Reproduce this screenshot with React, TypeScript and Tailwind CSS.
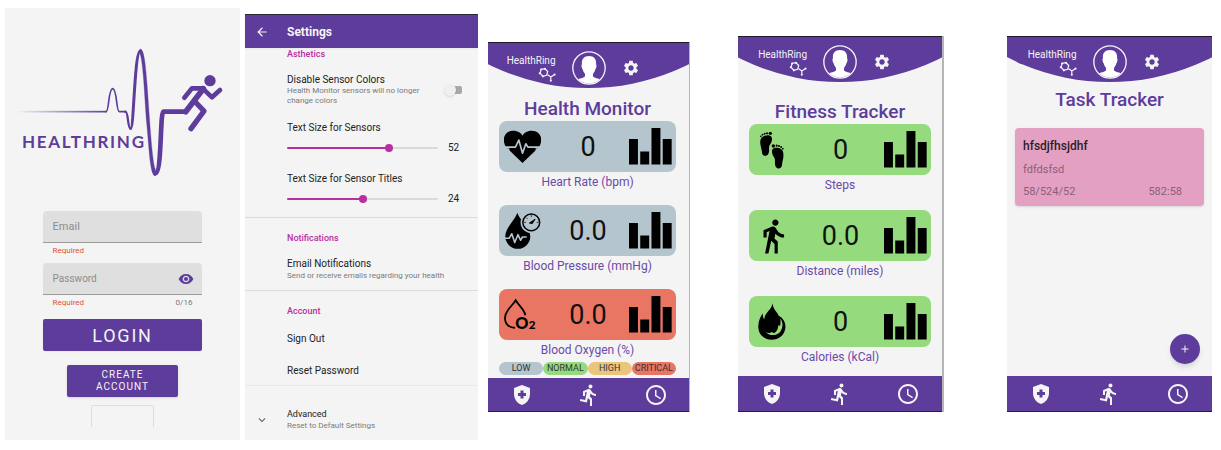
import { useState, type ReactNode } from "react";
import {
  MdAccessTime,
  MdAdd,
  MdArrowBack,
  MdDirectionsRun,
  MdDirectionsWalk,
  MdExpandMore,
  MdHealthAndSafety,
  MdSettings,
  MdVisibility,
} from "react-icons/md";

function Logo() {
  return (
    <svg
      viewBox="15 24 705 609"
      className="block w-full"
      role="img"
      aria-label="HealthRing"
      fill="none"
      stroke="#5e3c9b"
      strokeLinecap="round"
      strokeLinejoin="round"
    >
      <defs>
        <linearGradient id="fade" x1="0" x2="1" y1="0" y2="0">
          <stop offset="0" stopColor="#5e3c9b" stopOpacity="0" />
          <stop offset="1" stopColor="#5e3c9b" />
        </linearGradient>
      </defs>
      <rect x="50" y="332.5" width="270" height="5" fill="url(#fade)" stroke="none" />
      <path d="M318 335C328 335 324 268 338 266C352 268 348 335 358 335H376" strokeWidth="5" />
      <path d="M376 335C386 335 382 386 392 386" strokeWidth="7" />
      <path d="M392 385C402 385 403 153 421 153" strokeWidth="9" />
      <path
        d="M421 147C432 147 436 190 441 250C447 330 456 490 466 508L466 528C450 528 448 450 440 370C434 300 430 180 419 158Z"
        fill="#5e3c9b"
        strokeWidth="1"
      />
      <path d="M466 520C486 520 480 335 490 335H557" strokeWidth="14" />
      <g strokeWidth="14">
        <path d="M557 335L610 266" strokeWidth="17" />
        <path d="M610 265H576L553 293" />
        <path d="M608 265L636 292L660 270" />
        <path d="M583 303L612 333L573 386" strokeWidth="16" />
      </g>
      <circle cx="630" cy="242" r="17" fill="#5e3c9b" stroke="none" />
      <text
        x="66"
        y="443"
        fill="#5e3c9b"
        stroke="none"
        className="font-['Lato',sans-serif] text-[51px] font-bold tracking-widest"
      >
        HEALTHRING
      </text>
    </svg>
  );
}

function LoginScreen() {
  const [visible, setVisible] = useState(false);
  return (
    <section className="mt-2 flex h-[432px] min-w-0 grow-[235] basis-0 flex-col bg-[#f4f4f4]">
      <Logo />
      <form className="mx-auto flex w-[68%] flex-col" onSubmit={(e) => e.preventDefault()}>
        <input
          type="email"
          aria-label="Email"
          placeholder="Email"
          className="h-8 w-full rounded-t-sm border-b border-[#9a9a9a] bg-[#dfdfdf] px-2.5 text-[11px] outline-none placeholder:text-[#8c8c8c]"
        />
        <p className="px-2.5 pt-1 text-[8px] leading-2 text-[#dc5330]">Required</p>
        <div className="mt-2 flex h-8 items-center rounded-t-sm border-b border-[#9a9a9a] bg-[#dfdfdf] pr-2 pl-2.5">
          <input
            type={visible ? "text" : "password"}
            aria-label="Password"
            placeholder="Password"
            maxLength={16}
            className="min-w-0 grow bg-transparent text-[10px] outline-none placeholder:text-[#8c8c8c]"
          />
          <button type="button" aria-label="Show password" onClick={() => setVisible(!visible)}>
            <MdVisibility className="size-4 text-[#5e3c9b]" />
          </button>
        </div>
        <div className="flex justify-between px-2.5 pt-1 text-[8px] leading-2">
          <span className="text-[#dc5330]">Required</span>
          <span className="text-[#777777]">0/16</span>
        </div>
        <button
          type="submit"
          className="mt-3 h-8 rounded-xs bg-[#5e3c9b] text-[18px] tracking-widest text-[#f4f4f4] shadow-xs"
        >
          LOGIN
        </button>
        <button
          type="button"
          className="mx-auto mt-3.5 h-8 w-[70%] rounded-xs bg-[#5e3c9b] px-6 text-[10px] leading-3 tracking-widest text-[#f4f4f4] shadow-sm"
        >
          CREATE ACCOUNT
        </button>
        <div className="mx-auto mt-2 h-[22px] w-[40%] rounded-t-xs border border-b-0 border-[#dddddd]" />
      </form>
    </section>
  );
}

function SizeSlider({ id, label, initial, max }: { id: string; label: string; initial: number; max: number }) {
  const [value, setValue] = useState(initial);
  const fill = `${(value / max) * 100}%`;
  return (
    <div className="flex flex-col gap-2 pr-4">
      <label htmlFor={id} className="text-[10px] leading-3 text-[#222222]">
        {label}
      </label>
      <div className="flex items-center gap-2.5">
        <input
          id={id}
          type="range"
          min={0}
          max={max}
          value={value}
          onChange={(e) => setValue(Number(e.target.value))}
          style={{
            backgroundImage: `linear-gradient(to right, #b82fa0 ${fill}, #d9d9d9 ${fill})`,
          }}
          className="h-0.5 min-w-0 grow appearance-none rounded-full [&::-webkit-slider-thumb]:size-2 [&::-webkit-slider-thumb]:appearance-none [&::-webkit-slider-thumb]:rounded-full [&::-webkit-slider-thumb]:bg-[#b82fa0]"
        />
        <output htmlFor={id} className="w-3.5 text-[10px] leading-3 text-[#222222]">
          {value}
        </output>
      </div>
    </div>
  );
}

function SectionTitle({ children }: { children: ReactNode }) {
  return <h3 className="text-[9px] leading-3 font-medium text-[#b82fa0]">{children}</h3>;
}

function SettingsScreen() {
  return (
    <section className="mt-3.5 ml-[5px] flex h-[426px] min-w-0 grow-[233] basis-0 flex-col bg-[#f4f4f4]">
      <header className="flex h-[34px] shrink-0 items-center border-t border-[#2c2636] bg-[#5e3c9b] pl-2.5 text-[#f4f4f4] shadow-xs">
        <button type="button" aria-label="Back" className="w-8">
          <MdArrowBack className="size-3.5" />
        </button>
        <h2 className="text-[12px] font-bold">Settings</h2>
      </header>

      <div className="flex flex-col border-b border-[#dcdcdc] pb-3 pl-[42px]">
        <SectionTitle>Asthetics</SectionTitle>
        <div className="mt-3.5 flex items-center justify-between pr-4">
          <label htmlFor="disable-colors" className="text-[10px] leading-3 text-[#222222]">
            Disable Sensor Colors
            <span className="block text-[8px] leading-2.5 text-[#7b7b7b]">
              Health Monitor sensors will no longer
              <br />
              change colors
            </span>
          </label>
          <input
            id="disable-colors"
            type="checkbox"
            role="switch"
            className="flex h-2 w-4.5 appearance-none items-center rounded-xs bg-linear-to-r from-transparent from-30% to-[#a8a8a8] to-30% before:size-3 before:shrink-0 before:rounded-full before:bg-[#efefef] before:shadow-sm checked:justify-end"
          />
        </div>
        <div className="mt-4 flex flex-col gap-[19px]">
          <SizeSlider id="sensor-size" label="Text Size for Sensors" initial={52} max={76} />
          <SizeSlider id="title-size" label="Text Size for Sensor Titles" initial={24} max={48} />
        </div>
      </div>

      <div className="flex flex-col items-start gap-3.5 border-b border-[#dcdcdc] pt-3.5 pb-2 pl-[42px]">
        <SectionTitle>Notifications</SectionTitle>
        <button type="button" className="text-left text-[10px] leading-3 text-[#222222]">
          Email Notifications
          <span className="block text-[8px] leading-3 whitespace-nowrap text-[#7b7b7b]">
            Send or receive emails regarding your health
          </span>
        </button>
      </div>

      <div className="flex flex-col items-start border-b border-[#e9e9e9] pt-3.5 pb-2 pl-[42px] text-[10px] leading-3 text-[#222222]">
        <SectionTitle>Account</SectionTitle>
        <button type="button" className="mt-4">
          Sign Out
        </button>
        <button type="button" className="mt-5">
          Reset Password
        </button>
      </div>

      <button type="button" className="flex items-center pt-[22px] pl-2.5 text-left">
        <span className="w-8">
          <MdExpandMore className="size-3.5 text-[#666666]" />
        </span>
        <span className="text-[9px] leading-3 text-[#222222]">
          Advanced
          <span className="block text-[8px] leading-3 text-[#7b7b7b]">Reset to Default Settings</span>
        </span>
      </button>
    </section>
  );
}

function Molecule() {
  return (
    <svg viewBox="0 0 52 44" className="w-[18px]" fill="none" stroke="#f4f4f4" strokeWidth="3.500">
      <path d="M9 7L20 5L28 13L25 24L14 27L6 18Z" />
      <path d="M27 22L37 29M37 29L48 22M37 29V40" />
      <g fill="#f4f4f4" stroke="none">
        <circle cx="9" cy="7" r="3" />
        <circle cx="20" cy="5" r="3" />
        <circle cx="14" cy="27" r="3" />
        <circle cx="5" cy="18" r="3" />
        <circle cx="48" cy="22" r="3" />
        <circle cx="37" cy="40" r="3" />
      </g>
    </svg>
  );
}

function Avatar() {
  return (
    <svg viewBox="0 0 102 102" className="size-[34px]">
      <circle cx="51" cy="51" r="48.500" fill="none" stroke="#f4f4f4" strokeWidth="4" />
      <path
        d="M51 15C67 15 74 26 72 40C75 42 73 53 70 55C69 62 65 66 63 69V76C65 81 76 81 83 85A46 46 0 0 1 19 85C26 81 37 81 39 76V69C37 66 33 62 32 55C29 53 27 42 30 40C28 26 35 15 51 15Z"
        fill="#ffffff"
      />
    </svg>
  );
}

function TopBar() {
  return (
    <header className="grid h-[46px] shrink-0 grid-cols-[1fr_34px_1fr] items-start gap-4 border-t border-[#20182c] bg-[#5e3c9b] pt-2 text-[#f4f4f4] [clip-path:circle(225px_at_50%_-179px)]">
      <div className="flex flex-col items-end pt-1">
        <span className="text-[10px] leading-3">HealthRing</span>
        <Molecule />
      </div>
      <Avatar />
      <button type="button" aria-label="Settings" className="justify-self-start pt-2">
        <MdSettings className="size-[18px]" />
      </button>
    </header>
  );
}

function NavBar({ height }: { height: string }) {
  return (
    <nav
      className={`mt-auto grid shrink-0 grid-cols-3 items-center justify-items-center border-b border-[#2a1a4a] bg-[#5e3c9b] text-[#f4f4f4] ${height}`}
    >
      <button type="button" aria-label="Health">
        <MdHealthAndSafety className="size-6" />
      </button>
      <button type="button" aria-label="Fitness">
        <MdDirectionsRun className="size-6" />
      </button>
      <button type="button" aria-label="Tasks">
        <MdAccessTime className="size-6" />
      </button>
    </nav>
  );
}

function BarsIcon() {
  return (
    <svg viewBox="0 0 130 110" className="w-[43px]">
      <path d="M0 33H27V110H0ZM34 71H61V110H34ZM68 0H95V110H68ZM102 33H129V110H102Z" />
    </svg>
  );
}

function HeartIcon() {
  return (
    <svg viewBox="66 284 110 100" className="w-[37px]">
      <path d="M121 382L73 336C58 316 65 286 94 286C108 286 117 293 121 301C125 293 134 286 148 286C177 286 184 316 169 336Z" />
      <path d="M64 335H100L110 314L121 353L131 325L137 335H178" fill="none" stroke="#b4c5ce" strokeWidth="5" strokeLinejoin="round" />
      <path d="M66 338H82V347H78ZM176 338H160V347H164Z" fill="#b4c5ce" />
    </svg>
  );
}

function PressureIcon() {
  return (
    <svg viewBox="64 64 114 116" className="w-[37px]">
      <path d="M105 66C110 86 145 112 145 139A38 38 0 0 1 68 139C68 112 99 88 105 66Z" />
      <circle cx="148" cy="96" r="33" fill="#b4c5ce" />
      <circle cx="148" cy="96" r="26" fill="none" stroke="#000" strokeWidth="4.500" />
      <path d="M148 74V79M126 96H131M170 96H165M132 81L136 85M142 98L160 86L151 100Z" stroke="#000" strokeWidth="2.500" />
      <path d="M64 145H80L88 131L97 158L107 134L115 151L121 141H134" fill="none" stroke="#b4c5ce" strokeWidth="5" strokeLinejoin="round" />
    </svg>
  );
}

function OxygenIcon() {
  return (
    <svg viewBox="64 324 114 100" className="w-[37px]">
      <path d="M98 416C64 414 60 382 77 360C87 346 94 342 100 331C108 346 126 358 130 377" fill="none" stroke="#000" strokeWidth="5.500" />
      <text x="99" y="419" className="font-['Lato',sans-serif] text-[50px] font-black">
        O
      </text>
      <text x="140" y="419" className="font-['Lato',sans-serif] text-[36px] font-black">
        2
      </text>
    </svg>
  );
}

function StepsIcon() {
  return (
    <svg viewBox="70 304 108 114" className="w-9">
      <path d="M89 333C91 319 108 314 118 318C128 322 124 336 118 345C112 353 118 363 113 373C108 381 95 380 94 369C94 358 87 346 89 333Z" />
      <circle cx="119" cy="311" r="5" />
      <circle cx="109" cy="311" r="3.200" />
      <circle cx="102" cy="312" r="3" />
      <circle cx="95.500" cy="315" r="2.800" />
      <circle cx="90.500" cy="320" r="2.500" />
      <path d="M158 371C157 356 140 352 130 356C120 360 124 374 130 383C136 391 130 401 135 411C140 419 153 418 154 407C154 396 160 384 158 371Z" />
      <circle cx="128" cy="349" r="5" />
      <circle cx="138" cy="348" r="3.200" />
      <circle cx="145" cy="349" r="3" />
      <circle cx="151.500" cy="352" r="2.800" />
      <circle cx="156.500" cy="357" r="2.500" />
    </svg>
  );
}

function FlameIcon() {
  return (
    <svg viewBox="70 308 108 112" className="w-9">
      <path d="M126 309C127 329 140 334 144 346C160 354 166 370 164 384C160 407 144 418 123 418C100 418 84 402 83 382C82 366 88 350 97 339C96 347 97 353 101 357C101 337 122 331 126 309Z" />
      <path
        d="M149 355C159 367 157 386 146 397C134 408 114 406 105 395C112 399 119 398 124 395L130 399C139 393 143 384 143 374L148 377C150 369 150 362 149 355Z"
        fill="#95db7d"
      />
    </svg>
  );
}

type Sensor = { icon: ReactNode; value: string; label: string; tone: string };

function SensorCard({ icon, value, label, tone }: Sensor) {
  return (
    <article className="flex flex-col">
      <div className={`grid h-[51px] grid-cols-3 items-center rounded-lg pr-1 pl-[5px] ${tone}`}>
        <span>{icon}</span>
        <span className="pt-0.5 text-center text-[27px] leading-none text-[#111111]">{value}</span>
        <button type="button" aria-label={`${label} history`} className="justify-self-end">
          <BarsIcon />
        </button>
      </div>
      <h3 className="pt-0.5 text-center text-[12px] leading-4 text-[#6b4aa8]">{label}</h3>
    </article>
  );
}

const healthSensors: Sensor[] = [
  { icon: <HeartIcon />, value: "0", label: "Heart Rate (bpm)", tone: "bg-[#b4c5ce]" },
  { icon: <PressureIcon />, value: "0.0", label: "Blood Pressure (mmHg)", tone: "bg-[#b4c5ce]" },
  { icon: <OxygenIcon />, value: "0.0", label: "Blood Oxygen (%)", tone: "bg-[#e97663]" },
];

const fitnessSensors: Sensor[] = [
  { icon: <StepsIcon />, value: "0", label: "Steps", tone: "bg-[#95db7d]" },
  { icon: <MdDirectionsWalk className="size-[38px]" />, value: "0.0", label: "Distance (miles)", tone: "bg-[#95db7d]" },
  { icon: <FlameIcon />, value: "0", label: "Calories (kCal)", tone: "bg-[#95db7d]" },
];

const levels = [
  { name: "LOW", tone: "bg-[#b4c5ce]" },
  { name: "NORMAL", tone: "bg-[#95db7d]" },
  { name: "HIGH", tone: "bg-[#ecc57c]" },
  { name: "CRITICAL", tone: "bg-[#e97663]" },
];

function ScreenTitle({ children }: { children: ReactNode }) {
  return <h2 className="text-center text-[19px] leading-6 font-medium text-[#5e3c9b]">{children}</h2>;
}

function HealthScreen() {
  return (
    <section className="mt-[42px] ml-2.5 flex h-[370px] min-w-0 grow-[201] basis-0 flex-col border-r border-[#b5b5b5] bg-[#f4f4f4]">
      <TopBar />
      <div className="flex flex-col pt-[9px] pr-[13px] pl-[11px]">
        <ScreenTitle>Health Monitor</ScreenTitle>
        <div className="flex flex-col gap-[15px]">
          {healthSensors.map((s) => (
            <SensorCard key={s.label} {...s} />
          ))}
        </div>
        <ul className="mt-1 grid grid-cols-4">
          {levels.map((l) => (
            <li
              key={l.name}
              className={`flex h-[13px] items-center justify-center rounded-full text-[9px] leading-none text-[#333333] ${l.tone}`}
            >
              {l.name}
            </li>
          ))}
        </ul>
      </div>
      <NavBar height="h-[34px]" />
    </section>
  );
}

function FitnessScreen() {
  return (
    <section className="mt-9 ml-12 flex h-[376px] min-w-0 grow-[204] basis-0 flex-col border-r-2 border-[#b5b5b5] bg-[#f4f4f4]">
      <TopBar />
      <div className="flex flex-col px-[11px] pt-[18px]">
        <ScreenTitle>Fitness Tracker</ScreenTitle>
        <div className="flex flex-col gap-[17px]">
          {fitnessSensors.map((s) => (
            <SensorCard key={s.label} {...s} />
          ))}
        </div>
      </div>
      <NavBar height="h-9" />
    </section>
  );
}

function TaskScreen() {
  return (
    <section className="mt-9 mr-[9px] ml-[63px] flex h-[376px] min-w-0 grow-[205] basis-0 flex-col bg-[#f4f4f4]">
      <TopBar />
      <div className="flex grow flex-col px-2 pt-[6px]">
        <ScreenTitle>Task Tracker</ScreenTitle>
        <article className="mt-4 flex flex-col rounded-sm bg-[#e4a0c2] px-2 pt-2.5 pb-1.5 text-[11px] leading-4 text-[#8a5f76] shadow-sm">
          <h3 className="text-[12px] font-medium text-[#2b1d25]">hfsdjfhsjdhf</h3>
          <p className="mt-2">fdfdsfsd</p>
          <div className="mt-1.5 flex justify-between pr-3.5">
            <span>58/524/52</span>
            <span>582:58</span>
          </div>
        </article>
        <button
          type="button"
          aria-label="Add task"
          className="mt-auto mr-1 mb-3 flex size-[30px] items-center justify-center self-end rounded-full bg-[#5e3c9b] text-[#f4f4f4] shadow-md"
        >
          <MdAdd className="size-3" />
        </button>
      </div>
      <NavBar height="h-9" />
    </section>
  );
}

export default function App() {
  return (
    <main className="flex min-h-screen items-start bg-white pl-[5px] font-['Roboto',sans-serif]">
      <LoginScreen />
      <SettingsScreen />
      <HealthScreen />
      <FitnessScreen />
      <TaskScreen />
    </main>
  );
}
